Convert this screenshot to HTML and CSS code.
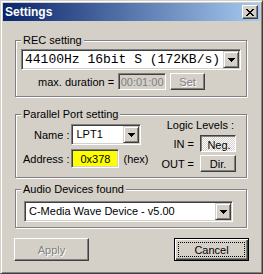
FILE: index.html
```html
<!DOCTYPE html>
<html lang="en">
<head>
    <meta charset="UTF-8">
    <title>Settings</title>
    <link rel="stylesheet" href="styles.css">
</head>
<body>
    <div class="window">
        <div class="titlebar">
            <span class="title">Settings</span>
            <button class="close-btn">
                <svg width="8" height="7" viewBox="0 0 8 7"><path d="M0 0h2v1H0zM6 0h2v1H6zM1 1h2v1H1zM5 1h2v1H5zM2 2h4v1H2zM3 3h2v1H3zM2 4h4v1H2zM1 5h2v1H1zM5 5h2v1H5zM0 6h2v1H0zM6 6h2v1H6z" fill="#000"/></svg>
            </button>
        </div>

        <div class="client">
            <div class="group group-rec">
                <span class="group-label">REC setting</span>
                <div class="combo combo-rec">
                    <span class="combo-text mono">44100Hz 16bit S (172KB/s)</span>
                    <span class="drop-btn"><svg width="7" height="4" viewBox="0 0 7 4"><path d="M0 0h7v1H0zM1 1h5v1H1zM2 2h3v1H2zM3 3h1v1H3z" fill="#000"/></svg></span>
                </div>
                <div class="duration-row">
                    <span>max. duration =</span>
                    <span class="field field-disabled">00:01:00</span>
                    <button class="btn btn-set" disabled>Set</button>
                </div>
            </div>

            <div class="group group-port">
                <span class="group-label">Parallel Port setting</span>
                <div class="port-fields">
                    <span class="field-label">Name :</span>
                    <div class="combo combo-port">
                        <span class="combo-text">LPT1</span>
                        <span class="drop-btn"><svg width="7" height="4" viewBox="0 0 7 4"><path d="M0 0h7v1H0zM1 1h5v1H1zM2 2h3v1H2zM3 3h1v1H3z" fill="#000"/></svg></span>
                    </div>
                    <span class="field-label">Address :</span>
                    <div class="address">
                        <span class="field field-address">0x378</span>
                        <span>(hex)</span>
                    </div>
                </div>
                <div class="logic">
                    <span class="logic-title">Logic Levels :</span>
                    <span class="field-label">IN =</span>
                    <button class="btn btn-pressed"><span>Neg.</span></button>
                    <span class="field-label">OUT =</span>
                    <button class="btn btn-dir">Dir.</button>
                </div>
            </div>

            <div class="group group-audio">
                <span class="group-label">Audio Devices found</span>
                <div class="combo combo-audio">
                    <span class="combo-text">C-Media Wave Device - v5.00</span>
                    <span class="drop-btn"><svg width="7" height="4" viewBox="0 0 7 4"><path d="M0 0h7v1H0zM1 1h5v1H1zM2 2h3v1H2zM3 3h1v1H3z" fill="#000"/></svg></span>
                </div>
            </div>

            <div class="actions">
                <button class="btn btn-action" disabled>Apply</button>
                <button class="btn btn-action btn-default"><span class="focus-ring">Cancel</span></button>
            </div>
        </div>
    </div>
</body>
</html>
```

FILE: styles.css
```css
* {
    box-sizing: border-box;
    margin: 0;
    padding: 0;
}

body {
    font-family: "Liberation Sans", Arial, sans-serif;
    font-size: 11px;
    color: #000;
    background: #d4d0c8;
}

.window {
    width: 263px;
    height: 274px;
    background: #d4d0c8;
    border: 1px solid;
    border-color: #d4d0c8 #404040 #404040 #d4d0c8;
    box-shadow: inset 1px 1px #fff, inset -1px -1px #808080;
    padding: 2px;
}

.titlebar {
    height: 18px;
    background: linear-gradient(to right, #0a246a, #a6caf0);
    display: flex;
    align-items: center;
    justify-content: space-between;
    padding: 0 2px;
}

.title {
    color: #fff;
    font-weight: bold;
    font-size: 12px;
}

.close-btn {
    width: 16px;
    height: 14px;
    background: #d4d0c8;
    border: 1px solid;
    border-color: #fff #404040 #404040 #fff;
    box-shadow: inset -1px -1px #808080;
    display: flex;
    align-items: center;
    justify-content: center;
}

.client {
    padding: 19px 13px 0 12px;
}

/* group boxes */
.group {
    position: relative;
    border: 1px solid #808080;
    box-shadow: inset 1px 1px #fff, 1px 1px #fff;
}

.group-label {
    position: absolute;
    top: -7px;
    left: 5px;
    padding: 0 2px;
    line-height: 13px;
    background: #d4d0c8;
}

.group-rec {
    padding: 8px 0 6px 5px;
}

.group-port {
    margin-top: 17px;
    display: flex;
    justify-content: space-between;
    align-items: flex-start;
    padding: 4px 10px 5px 7px;
}

.group-audio {
    margin-top: 11px;
    padding: 11px 0 5px 8px;
}

/* inputs */
.combo {
    display: flex;
    height: 21px;
    background: #fff;
    border: 1px solid;
    border-color: #808080 #fff #fff #808080;
    box-shadow: inset 1px 1px #404040, inset -1px -1px #d4d0c8;
    padding: 1px;
}

.combo-text {
    flex: 1;
    padding-left: 3px;
    line-height: 17px;
    white-space: nowrap;
    overflow: hidden;
}

.mono {
    font-family: "Liberation Mono", "Courier New", monospace;
    font-size: 13px;
    padding-left: 2px;
}

.drop-btn {
    width: 16px;
    height: 17px;
    background: #d4d0c8;
    border: 1px solid;
    border-color: #d4d0c8 #404040 #404040 #d4d0c8;
    box-shadow: inset 1px 1px #fff, inset -1px -1px #808080;
    display: flex;
    align-items: center;
    justify-content: center;
}

.combo-rec {
    width: 220px;
}

.combo-port {
    width: 70px;
}

.combo-audio {
    width: 209px;
}

.field {
    border: 1px solid;
    border-color: #808080 #fff #fff #808080;
    box-shadow: inset 1px 1px #404040, inset -1px -1px #d4d0c8;
    display: flex;
    align-items: center;
    justify-content: center;
}

.field-disabled {
    width: 48px;
    height: 17px;
    background: #d4d0c8;
    color: #808080;
}

.field-address {
    width: 48px;
    height: 19px;
    background: #ffff00;
}

.duration-row {
    display: flex;
    align-items: center;
    gap: 4px;
    height: 17px;
    margin-top: 3px;
    padding-left: 17px;
}

/* buttons */
.btn {
    font-family: inherit;
    font-size: 11px;
    color: #000;
    background: #d4d0c8;
    border: 1px solid;
    border-color: #fff #404040 #404040 #fff;
    box-shadow: inset -1px -1px #808080;
    display: flex;
    align-items: center;
    justify-content: center;
}

.btn:disabled {
    color: #808080;
    text-shadow: 1px 1px #fff;
}

.btn-set {
    width: 35px;
    height: 17px;
}

.btn-pressed {
    width: 36px;
    height: 17px;
    border-color: #404040 #fff #fff #404040;
    box-shadow: inset 1px 1px #808080;
    background: repeating-conic-gradient(#fff 0 25%, #d4d0c8 0 50%) 0 0 / 2px 2px;
}

.btn-pressed span {
    position: relative;
    top: 1px;
    left: 1px;
}

.btn-dir {
    width: 36px;
    height: 17px;
}

/* parallel port */
.port-fields {
    display: grid;
    grid-template-columns: auto auto;
    column-gap: 2px;
    row-gap: 4px;
    align-items: center;
    margin-top: 5px;
}

.field-label {
    justify-self: end;
}

.address {
    display: flex;
    align-items: center;
    gap: 4px;
}

.logic {
    display: grid;
    grid-template-columns: auto 36px;
    column-gap: 6px;
    row-gap: 3px;
    align-items: center;
}

.logic-title {
    grid-column: 1 / -1;
    justify-self: end;
    line-height: 13px;
    padding-right: 2px;
}

/* dialog buttons */
.actions {
    display: flex;
    justify-content: space-between;
    margin: 10px -2px 0 -1px;
}

.btn-action {
    width: 75px;
    height: 23px;
}

.btn-default {
    border: 1px solid #000;
    box-shadow: inset 1px 1px #fff, inset -1px -1px #404040, inset -2px -2px #808080;
    padding: 3px;
}

.focus-ring {
    flex: 1;
    align-self: stretch;
    border: 1px dotted #000;
    display: flex;
    align-items: center;
    justify-content: center;
}
```
